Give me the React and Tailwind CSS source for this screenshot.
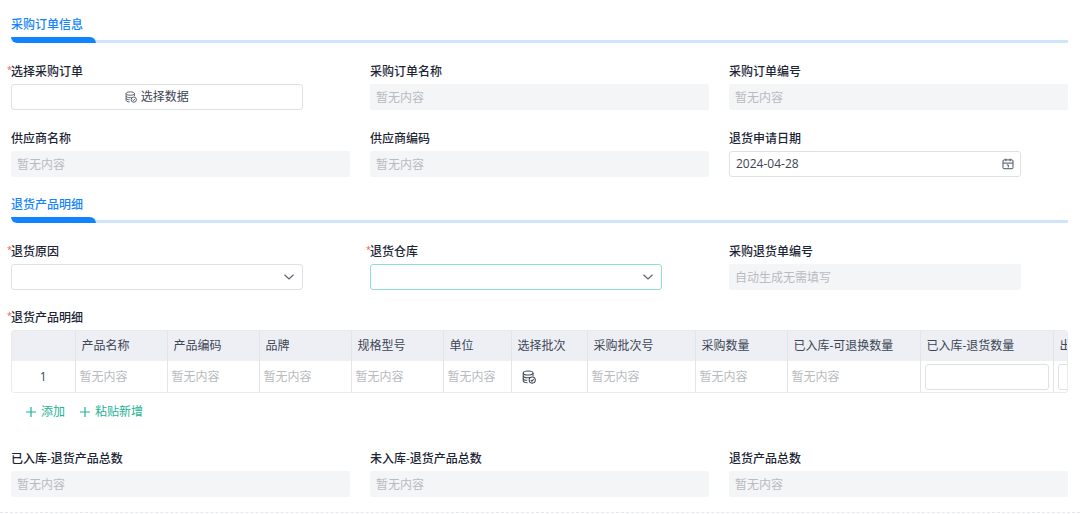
import { useId, useState } from "react";

function DatabaseCheckIcon({ className }) {
  return (
    <svg viewBox="0 0 16 16" fill="none" stroke="currentColor" strokeWidth="1.2" className={className} aria-hidden="true">
      <ellipse cx="7" cy="3.4" rx="5.6" ry="2.3" />
      <path d="M1.4 3.4v8.8c0 1.3 2 2.2 4.9 2.4M12.6 3.4v3.6" />
      <path d="M1.4 6.6c0 1.3 2.5 2.3 5.6 2.3 1 0 1.6-.1 2.3-.3M1.4 9.6c0 1.2 2 2 4.6 2.2" />
      <circle cx="11.7" cy="11.5" r="3.5" />
      <path d="M10 11.5l1.3 1.3 2.1-2.3" />
    </svg>
  );
}

function CalendarIcon({ className }) {
  return (
    <svg viewBox="0 0 12 12" fill="none" stroke="currentColor" className={className} aria-hidden="true">
      <rect x="1" y="1.9" width="10" height="8.8" rx="1" />
      <path d="M1 5.1h10M3.9 .6v2.6M8.1 .6v2.6M4.8 6.9h1.5v2.5" />
    </svg>
  );
}

function ChevronIcon({ className }) {
  return (
    <svg viewBox="0 0 12 12" fill="none" stroke="currentColor" strokeWidth="1.2" className={className} aria-hidden="true">
      <path d="M1.5 3.8L6 8l4.5-4.2" />
    </svg>
  );
}

function PlusIcon({ className }) {
  return (
    <svg viewBox="0 0 12 12" fill="none" stroke="currentColor" strokeWidth="1.2" className={className} aria-hidden="true">
      <path d="M6 1v10M1 6h10" />
    </svg>
  );
}

function SectionTitle({ children }) {
  return (
    <div>
      <h2 className="font-medium leading-5 text-[#1283ff]">{children}</h2>
      <div className="mt-0.5 flex items-end">
        <div className="h-1.5 w-[85px] rounded-tr-md rounded-bl-md bg-[#1283ff]" />
        <div className="h-[3px] flex-1 bg-[#cfe5ff]" />
      </div>
    </div>
  );
}

function Label({ id, required, children }) {
  return (
    <label htmlFor={id} className="relative mb-0.5 block font-medium leading-5 text-[#1b2534]">
      {required && <span className="absolute -top-0.5 -left-1 text-[9px] font-normal text-[#f0554f]">*</span>}
      {children}
    </label>
  );
}

function ReadonlyField({ label, placeholder = "暂无内容", narrow }) {
  const id = useId();
  return (
    <div>
      <Label id={id}>{label}</Label>
      <input
        id={id}
        disabled
        placeholder={placeholder}
        className={`block h-[26px] rounded-xs bg-[#f4f5f7] px-1.5 placeholder:text-[#b8bbc0] ${narrow ? "w-[86%]" : "w-full"}`}
      />
    </div>
  );
}

function SelectField({ label, active }) {
  const id = useId();
  return (
    <div>
      <Label id={id} required>{label}</Label>
      <div className="relative w-[86%]">
        <select
          id={id}
          className={`block h-[26px] w-full appearance-none rounded-[3px] border bg-white px-1.5 outline-none ${active ? "border-[#8fe0cf]" : "border-[#dfe0e3]"}`}
        />
        <ChevronIcon className="pointer-events-none absolute top-[7px] right-2 size-3 text-[#5c6470]" />
      </div>
    </div>
  );
}

function PickerField({ label }) {
  const id = useId();
  return (
    <div>
      <Label id={id} required>{label}</Label>
      <button
        id={id}
        type="button"
        className="flex h-[26px] w-[86%] items-center justify-center gap-1 rounded-[3px] border border-[#dfe0e3] bg-white text-[#3c4654]"
      >
        <DatabaseCheckIcon className="size-3 text-[#4b5563]" />
        选择数据
      </button>
    </div>
  );
}

function DateField({ label }) {
  const id = useId();
  const [value, setValue] = useState("2024-04-28");
  return (
    <div>
      <Label id={id}>{label}</Label>
      <div className="flex h-[26px] w-[86%] items-center rounded-[3px] border border-[#dfe0e3] bg-white px-1.5">
        <input
          id={id}
          value={value}
          onChange={(e) => setValue(e.target.value)}
          className="min-w-0 flex-1 text-[#3c4654] outline-none"
        />
        <CalendarIcon className="size-3 text-[#4b5563]" />
      </div>
    </div>
  );
}

const columns = [
  { title: "", width: "w-[63px]", kind: "index" },
  { title: "产品名称", width: "w-[92px]" },
  { title: "产品编码", width: "w-[92px]" },
  { title: "品牌", width: "w-[92px]" },
  { title: "规格型号", width: "w-[92px]" },
  { title: "单位", width: "w-[68px]" },
  { title: "选择批次", width: "w-[76px]", kind: "picker" },
  { title: "采购批次号", width: "w-[108px]" },
  { title: "采购数量", width: "w-[92px]" },
  { title: "已入库-可退换数量", width: "w-[133px]" },
  { title: "已入库-退货数量", width: "w-[133px]", kind: "input" },
  { title: "出", width: "w-[133px]", kind: "input" },
];

function Cell({ column }) {
  if (column.kind === "index") return <div className="text-center text-[#3c4654]">1</div>;
  if (column.kind === "picker")
    return (
      <button type="button" aria-label={column.title} className="ml-1.5 block text-[#3c4654]">
        <DatabaseCheckIcon className="size-3.5" />
      </button>
    );
  if (column.kind === "input")
    return (
      <input aria-label={column.title} className="block h-[26px] w-full rounded-[3px] border border-[#dfe0e3] bg-white px-1.5 outline-none" />
    );
  return <span className="text-[#b8bbc0]">暂无内容</span>;
}

function DetailTable() {
  return (
    <div className="overflow-x-auto rounded-[3px] border border-[#e8eaed] [scrollbar-width:none]">
      <table className="w-[1174px] table-fixed border-collapse">
        <thead>
          <tr className="h-[30px] bg-[#eeeff4]">
            {columns.map((c, i) => (
              <th key={i} className={`${c.width} border-r border-[#e2e4e9] px-1.5 text-left font-normal whitespace-nowrap text-[#3c4654]`}>
                {c.title}
              </th>
            ))}
          </tr>
        </thead>
        <tbody>
          <tr className="h-[31px]">
            {columns.map((c, i) => (
              <td key={i} className="border-r border-[#e2e4e9] px-1 whitespace-nowrap">
                <Cell column={c} />
              </td>
            ))}
          </tr>
        </tbody>
      </table>
    </div>
  );
}

export default function App() {
  return (
    <form
      onSubmit={(e) => e.preventDefault()}
      className="border-b border-dashed border-[#e6e7ea] bg-white py-[15px] font-['Open_Sans','Noto_Sans_CJK_SC',sans-serif] text-xs"
    >
      <div className="pr-3 pl-[11px]">
        <SectionTitle>采购订单信息</SectionTitle>
        <div className="mt-[19px] grid grid-cols-3 gap-x-5 gap-y-[19px]">
          <PickerField label="选择采购订单" />
          <ReadonlyField label="采购订单名称" />
          <ReadonlyField label="采购订单编号" />
          <ReadonlyField label="供应商名称" />
          <ReadonlyField label="供应商编码" />
          <DateField label="退货申请日期" />
        </div>

        <div className="mt-[18px]">
          <SectionTitle>退货产品明细</SectionTitle>
        </div>
        <div className="mt-[19px] grid grid-cols-3 gap-x-5">
          <SelectField label="退货原因" />
          <SelectField label="退货仓库" active />
          <ReadonlyField label="采购退货单编号" placeholder="自动生成无需填写" narrow />
        </div>

        <div className="mt-[18px]">
          <Label required>退货产品明细</Label>
          <DetailTable />
          <div className="mt-[9px] ml-3.5 flex gap-3.5 leading-5 text-[#1db394]">
            <button type="button" className="flex items-center gap-1">
              <PlusIcon className="size-3" />
              添加
            </button>
            <button type="button" className="flex items-center gap-1">
              <PlusIcon className="size-3" />
              粘贴新增
            </button>
          </div>
        </div>

        <div className="mt-[27px] grid grid-cols-3 gap-x-5">
          <ReadonlyField label="已入库-退货产品总数" />
          <ReadonlyField label="未入库-退货产品总数" />
          <ReadonlyField label="退货产品总数" />
        </div>
      </div>
    </form>
  );
}
